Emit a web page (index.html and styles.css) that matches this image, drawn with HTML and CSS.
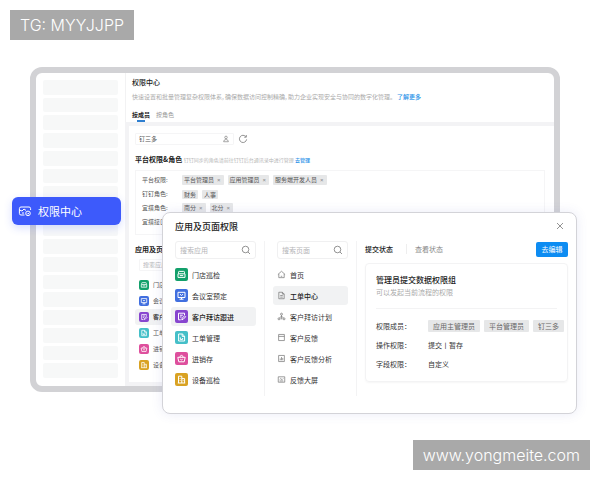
FILE: index.html
```html
<!DOCTYPE html>
<html lang="zh-CN">
<head>
  <meta charset="UTF-8" />
  <meta name="viewport" content="width=device-width, initial-scale=1.0" />
  <title>权限中心</title>
  <link rel="stylesheet" href="styles.css">
</head>
<body>
  <!-- shared icons -->
  <svg class="sprite" aria-hidden="true">
    <symbol id="i-store" viewBox="0 0 13 13"><path d="M3.5 5.6V4.2q0-.8.8-.8h4.4q.8 0 .8.8v1.4M3 5.8h7v3.6H3zM4.8 7.6h3.4" /></symbol>
    <symbol id="i-meeting" viewBox="0 0 13 13"><path d="M3 3.3h7v5.2H3zM4.5 10.2h4M5 5.2q1.5 2.6 3 0M6.5 8.5v1.7" /></symbol>
    <symbol id="i-visit" viewBox="0 0 13 13"><path d="M9.5 5V3.2h-6v6.6h2.2M5 5.2h2.8M5 7h1.6M6.8 9.8l.3-1.6L9.6 5.8l1 1-2.4 2.5z" /></symbol>
    <symbol id="i-order" viewBox="0 0 13 13"><path d="M3.6 3h3.8l2.2 2.2V10h-6zM7.2 3v2.4h2.4M5.3 6.4v2M5.3 8.4h2.3V7" /></symbol>
    <symbol id="i-stock" viewBox="0 0 13 13"><path d="M2.8 5.3h7.4l-1 4.5H3.8zM4.6 5.2l1.9-2.3 1.9 2.3M5.3 7.2q1.2 1.4 2.4 0" /></symbol>
    <symbol id="i-device" viewBox="0 0 13 13"><path d="M3.5 10V3.2h3.3V10M6.8 5.6h2.8V10M2.8 10h7.4M5.1 5v.8M5.1 7.2V8M8.2 7.3v.8" /></symbol>
    <symbol id="i-search" viewBox="0 0 10 10"><circle cx="4.5" cy="4.5" r="3.3" /><path d="M7 7l2 2" /></symbol>
    <symbol id="i-close" viewBox="0 0 10 10"><path d="M2 2l6 6M8 2l-6 6" /></symbol>
    <symbol id="i-home" viewBox="0 0 10 10"><path d="M1 5l4-3.6L9 5M2 4.4v4.1h6V4.4M4.2 7h1.6" /></symbol>
    <symbol id="i-doc" viewBox="0 0 10 10"><path d="M2 1.4h4l2 2v5.2H2zM6 1.4v2h2M3.6 5h2.8M3.6 6.8h2.8" /></symbol>
    <symbol id="i-tree" viewBox="0 0 10 10"><circle cx="5" cy="2.4" r="1.1" /><circle cx="2.2" cy="7.6" r="1.1" /><circle cx="7.8" cy="7.6" r="1.1" /><path d="M5 3.5v3.8M5 4.8L2.6 6.6M5 4.8l2.4 1.8M4 7.6h2" /></symbol>
    <symbol id="i-form" viewBox="0 0 10 10"><path d="M1.8 1.6h6.4v6.8H1.8zM1.8 3.8h6.4" /></symbol>
    <symbol id="i-chart" viewBox="0 0 10 10"><path d="M1.8 1.6h6.4v6.8H1.8zM3.6 5v2M5 3.4V7M6.4 4.4V7" /></symbol>
    <symbol id="i-screen" viewBox="0 0 10 10"><path d="M1.4 2h7.2v6H1.4zM3 5l1.2-1 1.4 1.2L7 3.8M3 6.6h4" /></symbol>
    <symbol id="i-user" viewBox="0 0 10 10"><circle cx="5" cy="3" r="1.6" /><path d="M2 8.4q0-2.6 3-2.8 3 .2 3 2.8z" /></symbol>
    <symbol id="i-refresh" viewBox="0 0 10 10"><path d="M8.6 5.4A3.6 3.6 0 1 1 7.8 2.6M8.3 1v2.2H6.2" /></symbol>
    <symbol id="i-card" viewBox="0 0 14 12"><path d="M6.5 10H3q-1.6 0-1.6-1.6V3.6Q1.4 2 3 2h8q1.6 0 1.6 1.6V5M1.4 5L4 6l2-2 2 1.4M4 8h2" /><circle cx="10" cy="8.4" r="2.3" /><path d="M9 8.4l.8.8 1.3-1.4" /></symbol>
  </svg>

  <div class="mark mark-top">TG: MYYJJPP</div>

  <div class="stage">
    <div class="frame">
      <aside class="sidebar">
        <i></i><i></i><i></i><i></i><i></i><i></i><i></i><i></i><i></i><i></i><i></i><i></i><i></i><i></i><i></i><i></i><i></i>
      </aside>
      <main class="main">
        <header class="head">
          <h1>权限中心</h1>
          <p>快速设置和批量管理复杂权限体系，确保数据访问控制精确，助力企业实现安全与协同的数字化管理。<a href="#">了解更多</a></p>
          <nav class="tabs">
            <a href="#" class="active">按成员</a>
            <a href="#">按角色</a>
          </nav>
        </header>
        <div class="body">
          <div class="tools">
            <label class="field member">
              <input type="text" value="钉三多" aria-label="成员" />
              <svg class="icon"><use href="#i-user" /></svg>
            </label>
            <button class="refresh" aria-label="刷新"><svg class="icon"><use href="#i-refresh" /></svg></button>
          </div>
          <h2>平台权限&amp;角色 <small>钉钉同步的角色请前往钉钉后台通讯录中进行管理 <a href="#">去管理</a></small></h2>
          <dl class="roles">
            <div><dt>平台权限:</dt><dd><span class="tag">平台管理员<b>×</b></span><span class="tag">应用管理员<b>×</b></span><span class="tag">服务端开发人员<b>×</b></span></dd></div>
            <div><dt>钉钉角色:</dt><dd><span class="tag">财务</span><span class="tag">人事</span></dd></div>
            <div><dt>宜搭角色:</dt><dd><span class="tag">南分<b>×</b></span><span class="tag">北分<b>×</b></span></dd></div>
            <div><dt>宜搭接口:</dt><dd></dd></div>
          </dl>
          <h2>应用及页面权限</h2>
          <label class="field small-search"><input type="text" placeholder="搜索应用" aria-label="搜索应用" /></label>
          <ul class="apps apps-small">
            <li><span class="app green"><svg><use href="#i-store" /></svg></span>门店巡检</li>
            <li><span class="app blue"><svg><use href="#i-meeting" /></svg></span>会议室预定</li>
            <li class="selected"><span class="app purple"><svg><use href="#i-visit" /></svg></span>客户拜访跟进</li>
            <li><span class="app cyan"><svg><use href="#i-order" /></svg></span>工单管理</li>
            <li><span class="app pink"><svg><use href="#i-stock" /></svg></span>进销存</li>
            <li><span class="app gold"><svg><use href="#i-device" /></svg></span>设备巡检</li>
          </ul>
        </div>
      </main>
    </div>

    <button class="current"><svg><use href="#i-card" /></svg>权限中心</button>

    <section class="modal">
      <header class="modal-head">
        <h2>应用及页面权限</h2>
        <button class="close" aria-label="关闭"><svg class="icon"><use href="#i-close" /></svg></button>
      </header>
      <div class="columns">
        <div class="col">
          <label class="field"><input type="text" placeholder="搜索应用" aria-label="搜索应用" /><svg class="icon"><use href="#i-search" /></svg></label>
          <ul class="apps">
            <li><span class="app green"><svg><use href="#i-store" /></svg></span>门店巡检</li>
            <li><span class="app blue"><svg><use href="#i-meeting" /></svg></span>会议室预定</li>
            <li class="selected"><span class="app purple"><svg><use href="#i-visit" /></svg></span>客户拜访跟进</li>
            <li><span class="app cyan"><svg><use href="#i-order" /></svg></span>工单管理</li>
            <li><span class="app pink"><svg><use href="#i-stock" /></svg></span>进销存</li>
            <li><span class="app gold"><svg><use href="#i-device" /></svg></span>设备巡检</li>
          </ul>
        </div>
        <div class="col">
          <label class="field"><input type="text" placeholder="搜索页面" aria-label="搜索页面" /><svg class="icon"><use href="#i-search" /></svg></label>
          <ul class="apps pages">
            <li><svg class="icon"><use href="#i-home" /></svg>首页</li>
            <li class="selected"><svg class="icon"><use href="#i-doc" /></svg>工单中心</li>
            <li><svg class="icon"><use href="#i-tree" /></svg>客户拜访计划</li>
            <li><svg class="icon"><use href="#i-form" /></svg>客户反馈</li>
            <li><svg class="icon"><use href="#i-chart" /></svg>客户反馈分析</li>
            <li><svg class="icon"><use href="#i-screen" /></svg>反馈大屏</li>
          </ul>
        </div>
        <div class="detail">
          <div class="states">
            <a href="#" class="active">提交状态</a>
            <a href="#">查看状态</a>
            <button class="edit">去编辑</button>
          </div>
          <div class="card">
            <h3>管理员提交数据权限组</h3>
            <p>可以发起当前流程的权限</p>
            <dl>
              <div><dt>权限成员：</dt><dd><span class="tag">应用主管理员</span><span class="tag">平台管理员</span><span class="tag">钉三多</span></dd></div>
              <div><dt>操作权限：</dt><dd>提交丨暂存</dd></div>
              <div><dt>字段权限：</dt><dd>自定义</dd></div>
            </dl>
          </div>
        </div>
      </div>
    </section>
  </div>

  <div class="mark mark-bottom">www.yongmeite.com</div>
</body>
</html>
```
FILE: styles.css
```css
* {
  box-sizing: border-box;
}

body {
  position: relative;
  min-height: 100vh;
  margin: 0;
  padding: 67px 23px 0 12px;
  background: #fff;
  color: #333;
  font-family: "Noto Sans CJK SC", sans-serif;
  font-size: 7px;
}

h1, h2, h3, p, ul, dl, dd {
  margin: 0;
  padding: 0;
}

ul {
  list-style: none;
}

a {
  color: #2b93e8;
  text-decoration: none;
}

button, input {
  border: none;
  background: none;
  padding: 0;
  color: inherit;
  font: inherit;
}

button {
  cursor: pointer;
}

svg {
  fill: none;
  stroke: currentColor;
  stroke-width: 1;
}

.sprite {
  position: absolute;
  width: 0;
  height: 0;
}

.icon {
  flex: none;
  width: 10px;
  height: 10px;
  color: #777;
  stroke-width: 0.8;
}

/* corner labels */
.mark {
  position: absolute;
  height: 30px;
  padding: 0 10px;
  background: #a9a9a9;
  color: #fff;
  font-family: Inter, sans-serif;
  font-size: 16px;
  font-weight: 300;
  line-height: 30px;
}

.mark-top {
  top: 10px;
  left: 10px;
}

.mark-bottom {
  right: 10px;
  bottom: 10px;
}

/* window behind */
.stage {
  position: relative;
}

.frame {
  display: flex;
  margin: 0 17px 0 18px;
  border: 6px solid #d2d2d5;
  border-radius: 12px;
  background: #fff;
  overflow: hidden;
}

.sidebar {
  display: flex;
  flex-direction: column;
  gap: 3px;
  width: 89px;
  padding: 7px 7px 8px;
}

.sidebar i {
  flex: 1;
  border-radius: 2px;
  background: #f7f8f8;
}

.main {
  flex: 1;
  min-width: 0;
  color: #555;
  font-size: 6px;
  line-height: 8px;
}

.head {
  padding: 4px 0 0 6px;
  border-left: 1px solid #f2f2f3;
}

.head h1 {
  color: #222;
  font-size: 7px;
  font-weight: 500;
  line-height: 10px;
}

.head p {
  margin: 6px 0 10px;
  color: #aaa;
  white-space: nowrap;
  font-feature-settings: "palt";
}

.head p a {
  margin-left: 4px;
  font-weight: 500;
}

.tabs {
  display: flex;
  gap: 6px;
}

.tabs a {
  color: #999;
  padding-bottom: 3px;
}

.tabs .active {
  color: #222;
  font-weight: 700;
  background: linear-gradient(#2f7fd0, #2f7fd0) center bottom / 8px 2px no-repeat;
}

.body {
  padding: 7px 9px 9px 6px;
  border: 4px solid #f3f3f5;
  border-width: 4px 0 4px 4px;
}

.tools {
  display: flex;
  gap: 4px;
  margin-bottom: 9px;
}

.field {
  display: flex;
  align-items: center;
  height: 18px;
  padding: 0 4px;
  border: 1px solid #f0f0f1;
  border-radius: 3px;
}

.field input {
  flex: 1;
  min-width: 0;
  outline: none;
}

.field input::placeholder {
  color: #b5b5b8;
}

.member, .small-search {
  width: 99px;
  height: 12px;
  padding: 0 3px;
  border-color: #f5f5f6;
  border-radius: 1px;
}

.member .icon {
  width: 8px;
  height: 8px;
}

.refresh {
  display: flex;
  align-items: center;
}

.body h2 {
  color: #222;
  font-size: 7px;
  font-weight: 700;
  line-height: 10px;
  white-space: nowrap;
}

.body h2 small {
  color: #b5b5b5;
  font-size: 5px;
  font-weight: 400;
}

.body h2 small a {
  font-weight: 500;
}

.roles {
  margin: 5px 0 9px;
  padding: 2px 0 5px;
  border: 1px solid #f5f5f6;
}

.roles div {
  display: flex;
  align-items: center;
  height: 14px;
  padding-left: 6px;
}

.roles dt {
  width: 40px;
  white-space: nowrap;
}

.roles dd {
  display: flex;
  gap: 4px;
}

.tag {
  padding: 0 2px;
  border-radius: 1px;
  background: #e6e7e8;
  line-height: 9px;
  white-space: nowrap;
}

.tag b {
  margin: 0 1px 0 3px;
  color: #888;
  font-family: "Liberation Sans", sans-serif;
  font-weight: 400;
}

.small-search {
  margin: 5px 0 6px 4px;
}

/* app and page lists */
.apps li {
  display: flex;
  align-items: center;
  gap: 4px;
  height: 19px;
  margin: 0 0 2px -4px;
  padding-left: 4px;
  border-radius: 3px;
  white-space: nowrap;
}

.apps .selected {
  background: #f1f2f3;
  color: #222;
  font-weight: 500;
}

.apps-small li {
  height: 16px;
  margin: 0;
}

.app {
  display: flex;
  flex: none;
  width: 13px;
  height: 13px;
  border-radius: 2px;
  color: #fff;
}

.app svg {
  width: 100%;
  height: 100%;
}

.apps-small .app {
  width: 10px;
  height: 10px;
}

.green {
  background: #13a06b;
}

.blue {
  background: #416fdf;
}

.purple {
  background: #8745cf;
}

.cyan {
  background: #45bfc8;
}

.pink {
  background: #de4f9d;
}

.gold {
  background: #d9a223;
}

/* highlighted menu entry */
.current {
  position: absolute;
  top: 130px;
  left: 0;
  display: flex;
  align-items: center;
  gap: 6px;
  width: 109px;
  height: 28px;
  padding-left: 6px;
  border-radius: 6px;
  background: #3d5afb;
  box-shadow: 0 3px 8px rgba(61, 90, 251, 0.2);
  color: #fff;
  font-size: 11px;
}

.current svg {
  width: 14px;
  height: 12px;
}

/* dialog */
.modal {
  position: absolute;
  top: 145px;
  left: 150px;
  right: 0;
  padding: 5px 8px 17px 12px;
  border: 1px solid #d3d3d8;
  border-radius: 8px;
  background: #fff;
  box-shadow: 0 0 12px rgba(80, 90, 190, 0.12);
}

.modal-head {
  display: flex;
  align-items: center;
  justify-content: space-between;
  height: 16px;
  margin-bottom: 7px;
}

.modal-head h2 {
  color: #222;
  font-size: 9px;
  font-weight: 500;
}

.close {
  display: flex;
  margin-right: 3px;
}

.columns {
  display: grid;
  grid-template-columns: 90px 92px 1fr;
}

.col {
  padding: 0 8px 5px 0;
  border-right: 1px solid #f3f3f4;
}

.col + .col {
  padding-left: 12px;
}

.col .field {
  margin-bottom: 6px;
}

.pages .icon {
  width: 9px;
  height: 9px;
}

.detail {
  min-width: 0;
  padding-left: 8px;
}

.states {
  display: flex;
  align-items: center;
  height: 16px;
  margin-bottom: 6px;
}

.states a {
  color: #888;
}

.states .active {
  padding-right: 13px;
  margin-right: 8px;
  border-right: 1px solid #eee;
  color: #222;
  font-weight: 500;
}

.edit {
  width: 32px;
  height: 15px;
  margin-left: auto;
  border-radius: 2px;
  background: #0d8cf2;
  color: #fff;
}

.card {
  padding: 9px 0 8px 10px;
  border: 1px solid #f3f3f4;
  border-radius: 4px;
  box-shadow: 0 1px 2px rgba(0, 0, 0, 0.04);
}

.card h3 {
  color: #222;
  font-size: 8px;
  font-weight: 500;
  line-height: 13px;
}

.card p {
  color: #aaa;
  line-height: 12px;
}

.card dl {
  margin-top: 10px;
  margin-right: 10px;
  padding-top: 7px;
  border-top: 1px solid #f3f3f4;
}

.card dl div {
  display: flex;
  align-items: center;
  height: 19px;
  white-space: nowrap;
}

.card dt {
  flex: none;
  width: 52px;
}

.card dd {
  display: flex;
  gap: 4px;
}

.card .tag {
  padding: 0 5px;
  color: #666;
  line-height: 12px;
}
```
